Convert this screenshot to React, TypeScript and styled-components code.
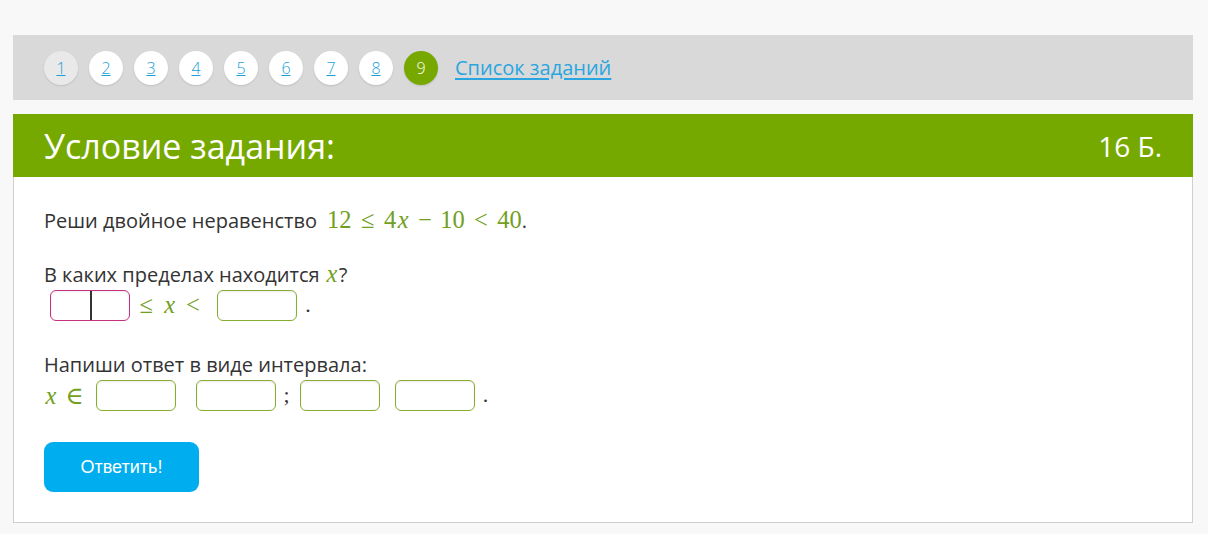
import styled, { createGlobalStyle } from "styled-components";

const GlobalStyle = createGlobalStyle`
  html, body {
    margin: 0;
    padding: 0;
    background: #f8f8f8;
  }
  body {
    font-family: "Open Sans", "Liberation Sans", sans-serif;
    color: #333;
  }
`;

const Page = styled.div`
  padding: 35px 15px 12px 13px;
  display: flex;
  flex-direction: column;
  gap: 14px;
`;

const NavBar = styled.nav`
  height: 65px;
  background: #d9d9d9;
  display: flex;
  align-items: center;
  gap: 11px;
  padding-left: 31px;
`;

const Bubble = styled.a<{ $state: "visited" | "open" | "current" }>`
  width: 34px;
  height: 34px;
  border-radius: 50%;
  display: flex;
  align-items: center;
  justify-content: center;
  font-size: 16px;
  font-weight: 300;
  box-shadow: 0 1px 2px rgba(0, 0, 0, 0.12);
  background: ${(p) =>
    p.$state === "current" ? "#76a800" : p.$state === "visited" ? "#e9e9e9" : "#fff"};
  color: ${(p) => (p.$state === "current" ? "#fff" : "#1b9fd6")};
  text-decoration: ${(p) => (p.$state === "current" ? "none" : "underline")};
`;

const TaskListLink = styled.a`
  margin-left: 6px;
  font-size: 20px;
  color: #29a6df;
  text-decoration: underline;
  text-underline-offset: 3px;
`;

const Card = styled.section`
  display: flex;
  flex-direction: column;
`;

const CardHeader = styled.header`
  height: 63px;
  background: #76a900;
  color: #fff;
  display: flex;
  align-items: center;
  justify-content: space-between;
  padding: 0 31px;
`;

const Title = styled.h1`
  margin: 0;
  font-size: 34px;
  font-weight: 400;
`;

const Points = styled.span`
  font-size: 28px;
`;

const CardBody = styled.div`
  background: #fff;
  border: 1px solid #cfcfcf;
  border-top: none;
  padding: 29px 30px 30px 30px;
  display: flex;
  flex-direction: column;
`;

const Paragraph = styled.p<{ $top?: number }>`
  margin: ${(p) => p.$top ?? 0}px 0 0;
  font-size: 20px;
  line-height: 28px;
  color: #333;
`;

/* KaTeX-like math: relations get thick spaces, binary ops medium spaces */
const Math = styled.span<{ $ml?: number; $mr?: number }>`
  font-family: "Liberation Serif", "DejaVu Serif", serif;
  font-size: 24.5px;
  color: #72a01e;
  white-space: nowrap;
  margin-left: ${(p) => p.$ml ?? 0}px;
  margin-right: ${(p) => p.$mr ?? 0}px;
`;

const Rel = styled.span`
  display: inline-block;
  width: 0.778em;
  margin: 0 0.278em;
  text-align: center;
`;

const Bin = styled.span`
  display: inline-block;
  width: 0.778em;
  margin: 0 0.222em;
  text-align: center;
`;

const Var = styled.i`
  font-family: "Liberation Serif", "DejaVu Serif", serif;
  font-style: italic;
  display: inline-block;
  width: 0.57em;
  text-align: center;
`;

const AnswerRow = styled.div`
  display: flex;
  align-items: center;
  height: 32px;
`;

const AnswerBox = styled.span<{ $focused?: boolean; $ml?: number }>`
  position: relative;
  display: inline-block;
  box-sizing: border-box;
  width: 80px;
  height: 31px;
  margin-left: ${(p) => p.$ml ?? 0}px;
  border: 1px solid ${(p) => (p.$focused ? "#c5307f" : "#86ad2e")};
  border-radius: 6px;
  background: #fff;
  box-shadow: inset 0 1px 2px rgba(0, 0, 0, 0.08);
`;

const Caret = styled.span`
  position: absolute;
  left: 39px;
  top: 0;
  bottom: 0;
  width: 2px;
  background: #333;
`;

const Punct = styled.span<{ $ml: number; $mr?: number }>`
  margin-left: ${(p) => p.$ml}px;
  margin-right: ${(p) => p.$mr ?? 0}px;
  font-family: "Liberation Serif", serif;
  font-size: 22px;
  color: #333;
`;

const SubmitButton = styled.button`
  margin-top: 31px;
  align-self: flex-start;
  width: 155px;
  height: 50px;
  border: none;
  border-radius: 9px;
  background: #00adee;
  color: #fff;
  font-family: "Liberation Sans", Arial, sans-serif;
  font-size: 18px;
  cursor: pointer;
`;

const tasks = [1, 2, 3, 4, 5, 6, 7, 8, 9];

export default function App() {
  return (
    <>
      <GlobalStyle />
      <Page>
        <NavBar>
          {tasks.map((n) => (
            <Bubble
              key={n}
              href="#"
              $state={n === 9 ? "current" : n === 1 ? "visited" : "open"}
            >
              {n}
            </Bubble>
          ))}
          <TaskListLink href="#">Список заданий</TaskListLink>
        </NavBar>

        <Card>
          <CardHeader>
            <Title>Условие задания:</Title>
            <Points>16 Б.</Points>
          </CardHeader>
          <CardBody>
            <Paragraph>
              Реши двойное неравенство
              <Math $ml={10}>
                12<Rel>≤</Rel>4<Var>x</Var>
                <Bin>−</Bin>10<Rel>&lt;</Rel>40
              </Math>
              .
            </Paragraph>

            <Paragraph $top={25}>
              В каких пределах находится{" "}
              <Math>
                <Var>x</Var>
              </Math>
              ?
            </Paragraph>
            <AnswerRow>
              <AnswerBox $focused $ml={6}>
                <Caret />
              </AnswerBox>
              <Math $mr={8}>
                <Rel>≤</Rel>
                <Var>x</Var>
                <Rel>&lt;</Rel>
              </Math>
              <AnswerBox />
              <Punct $ml={8}>.</Punct>
            </AnswerRow>

            <Paragraph $top={30}>Напиши ответ в виде интервала:</Paragraph>
            <AnswerRow>
              <Math $mr={5}>
                <Var>x</Var>
                <Rel>∈</Rel>
              </Math>
              <AnswerBox />
              <AnswerBox $ml={20} />
              <Punct $ml={8} $mr={10}>;</Punct>
              <AnswerBox />
              <AnswerBox $ml={15} />
              <Punct $ml={8}>.</Punct>
            </AnswerRow>

            <SubmitButton>Ответить!</SubmitButton>
          </CardBody>
        </Card>
      </Page>
    </>
  );
}
